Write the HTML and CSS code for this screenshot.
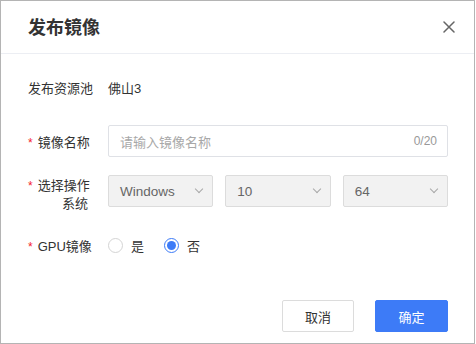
FILE: index.html
```html
<!DOCTYPE html>
<html lang="zh-CN">
<head>
    <meta charset="UTF-8">
    <meta name="viewport" content="width=device-width, initial-scale=1.0">
    <title>发布镜像</title>
    <link rel="stylesheet" href="styles.css">
</head>
<body>
    <div class="dialog">
        <div class="dialog-header">
            <div class="dialog-title">发布镜像</div>
            <button class="close-btn" type="button" aria-label="关闭">
                <svg width="12" height="12" viewBox="0 0 12 12">
                    <path d="M1 1 L11 11 M11 1 L1 11" stroke="#666" stroke-width="1.5" fill="none" stroke-linecap="round"/>
                </svg>
            </button>
        </div>

        <div class="dialog-body">
            <div class="form-item item-pool">
                <div class="form-label">发布资源池</div>
                <div class="form-content">佛山3</div>
            </div>

            <div class="form-item item-name">
                <div class="form-label"><span class="required">*</span>镜像名称</div>
                <div class="form-content">
                    <div class="input">
                        <span class="placeholder">请输入镜像名称</span>
                        <span class="counter">0/20</span>
                    </div>
                </div>
            </div>

            <div class="form-item item-os">
                <div class="form-label label-wrap"><span class="required">*</span>选择操作<br>系统</div>
                <div class="form-content">
                    <div class="select-group">
                        <div class="select"><span>Windows</span><i class="arrow"></i></div>
                        <div class="select"><span>10</span><i class="arrow"></i></div>
                        <div class="select"><span>64</span><i class="arrow"></i></div>
                    </div>
                </div>
            </div>

            <div class="form-item item-gpu">
                <div class="form-label"><span class="required">*</span>GPU镜像</div>
                <div class="form-content">
                    <label class="radio"><span class="radio-dot"></span>是</label>
                    <label class="radio checked"><span class="radio-dot"></span>否</label>
                </div>
            </div>
        </div>

        <div class="dialog-footer">
            <button class="btn" type="button">取消</button>
            <button class="btn btn-primary" type="button">确定</button>
        </div>
    </div>
</body>
</html>
```

FILE: styles.css
```css
* {
    margin: 0;
    padding: 0;
    box-sizing: border-box;
    font-family: 'Liberation Sans', 'Noto Sans CJK SC', sans-serif;
}

body {
    background: #fff;
    width: 476px;
    height: 344px;
    overflow: hidden;
}

.dialog {
    width: 475px;
    height: 344px;
    border: 1px solid #b4b4b4;
    background: #fff;
    display: flex;
    flex-direction: column;
}

.dialog-header {
    height: 53px;
    border-bottom: 1px solid #eceef3;
    display: flex;
    align-items: center;
    justify-content: space-between;
    padding: 0 18px 0 27px;
}

.dialog-title {
    font-size: 18px;
    font-weight: bold;
    color: #333;
    margin-top: -2px;
}

.close-btn {
    background: none;
    border: none;
    width: 14px;
    height: 14px;
    display: flex;
    align-items: center;
    justify-content: center;
    cursor: pointer;
}

.dialog-body {
    padding: 17px 26px 0 27px;
}

.form-item {
    display: flex;
    align-items: center;
    font-size: 13px;
    color: #333;
}

.form-label {
    width: 60px;
    margin-right: 20px;
    text-align: right;
    color: #333;
    white-space: nowrap;
}

.label-wrap {
    line-height: 18px;
    align-self: flex-start;
    padding-top: 2px;
}

.required {
    color: #f5222d;
    margin-right: 5px;
    font-size: 12px;
}

.form-content {
    flex: 1;
    display: flex;
    align-items: center;
}

.item-pool {
    height: 32px;
}

.item-name {
    margin-top: 22px;
}

.item-os {
    margin-top: 18px;
    height: 36px;
    align-items: flex-start;
}

.item-gpu {
    margin-top: 18px;
    height: 32px;
}

.input {
    width: 100%;
    height: 32px;
    border: 1px solid #dfe1e6;
    border-radius: 2px;
    display: flex;
    align-items: center;
    justify-content: space-between;
    padding: 0 10px 0 11px;
}

.placeholder {
    color: #a8a8a8;
}

.counter {
    color: #999;
    font-size: 12px;
}

.select-group {
    width: 100%;
    display: grid;
    grid-template-columns: 1fr 1fr 1fr;
    gap: 12px;
}

.select {
    height: 32px;
    background: #f2f2f2;
    border: 1px solid #dcdcdc;
    border-radius: 2px;
    display: flex;
    align-items: center;
    justify-content: space-between;
    padding: 0 10px 0 11px;
    color: #666;
    font-size: 13.5px;
}

.arrow {
    width: 6px;
    height: 6px;
    border-right: 1px solid #a8a8a8;
    border-bottom: 1px solid #a8a8a8;
    transform: rotate(45deg);
    margin-top: -4px;
}

.radio {
    display: flex;
    align-items: center;
    gap: 8px;
    margin-right: 20px;
    color: #333;
    cursor: pointer;
}

.radio-dot {
    width: 15px;
    height: 15px;
    border: 1px solid #d4d4d4;
    border-radius: 50%;
    display: flex;
    align-items: center;
    justify-content: center;
}

.radio.checked .radio-dot {
    border-color: #3d7bf7;
}

.radio.checked .radio-dot::after {
    content: '';
    width: 9px;
    height: 9px;
    border-radius: 50%;
    background: #3d7bf7;
}

.dialog-footer {
    margin-top: auto;
    display: flex;
    justify-content: flex-end;
    gap: 21px;
    padding: 0 26px 11px 0;
}

.btn {
    width: 72px;
    height: 32px;
    border: 1px solid #dcdcdc;
    border-radius: 2px;
    background: #fff;
    color: #333;
    font-size: 13px;
    cursor: pointer;
}

.btn-primary {
    width: 73px;
    background: #3d7bf7;
    border-color: #3d7bf7;
    color: #fff;
}
```
